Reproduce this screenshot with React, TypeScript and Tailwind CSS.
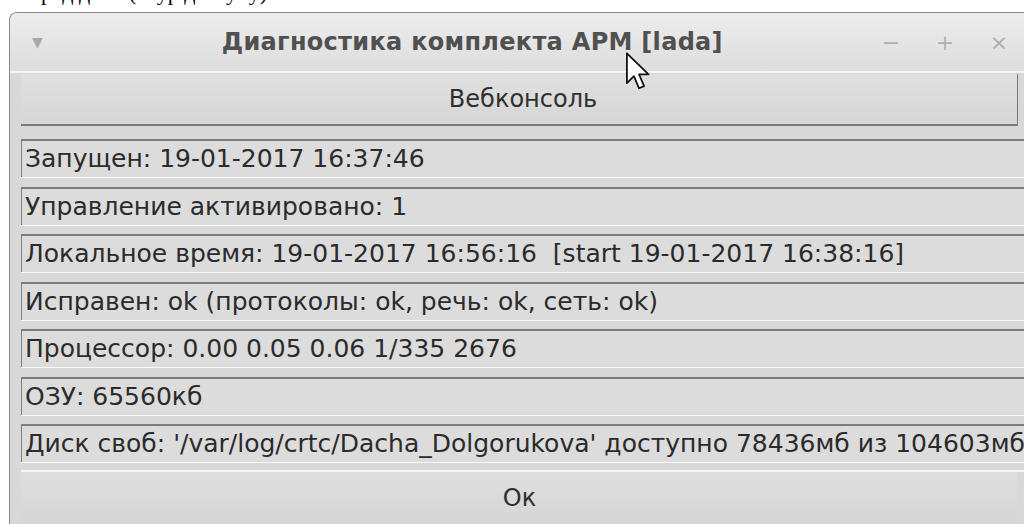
import React from "react";

const rows = [
  "Запущен: 19-01-2017 16:37:46",
  "Управление активировано: 1",
  "Локальное время: 19-01-2017 16:56:16\u00a0\u00a0[start 19-01-2017 16:38:16]",
  "Исправен: ok (протоколы: ok, речь: ok, сеть: ok)",
  "Процессор: 0.00 0.05 0.06 1/335 2676",
  "ОЗУ: 65560кб",
  "Диск своб: '/var/log/crtc/Dacha_Dolgorukova' доступно 78436мб из 104603мб",
];

function Pointer() {
  return (
    <svg width="28" height="46" viewBox="0 0 22 34" className="absolute left-[625px] top-[50px]">
      <path
        d="M1.5 1.5 L1.5 25 L7 19.5 L11 29 L15 27.3 L11 18 L18.5 18 Z"
        fill="#ffffff"
        stroke="#111111"
        strokeWidth="1.4"
        strokeLinejoin="round"
      />
    </svg>
  );
}

export default function App() {
  return (
    <div className="relative w-[1024px] h-[524px] overflow-hidden bg-white font-['DejaVu_Sans','Noto_Sans',sans-serif]">
      {/* tail of the text line above the dialog */}
      <div className="h-[12px] overflow-hidden">
        <div className="-mt-[19px] pl-[30px] font-['Liberation_Serif',serif] text-[22px] leading-[24px] text-black whitespace-nowrap">
          ород данн (ы ур доступу)
        </div>
      </div>

      <div className="ml-[9px] w-[1040px] h-[512px] border-t border-l border-[#8a8a8a] rounded-tl-[8px] bg-[#d8d8d8] overflow-hidden">
        {/* title bar */}
        <div className="relative h-[60px] flex items-center bg-gradient-to-b from-[#ededed] to-[#dddddd] border-b-2 border-[#f4f4f4]">
          <span className="ml-[22px] text-[14px] text-[#a9a9a9]">▼</span>
          <span className="ml-[179px] text-[24px] font-bold text-[#505050] tracking-[0.3px]">
            Диагностика комплекта АРМ [lada]
          </span>
          <div className="ml-auto mr-[38px] flex items-center gap-[30px] text-[22px] text-[#b0b0b0]">
            <span className="w-[24px] text-center">−</span>
            <span className="w-[24px] text-center">+</span>
            <span className="w-[24px] text-center">×</span>
          </div>
        </div>

        <div className="pl-[11px] pt-[1px]">
          <button className="w-[997px] h-[52px] flex items-center justify-center pl-[8px] bg-gradient-to-b from-[#e0e0e0] to-[#d6d6d6] border-b-2 border-r border-[#7a7a7a] text-[24px] text-[#2f2f2f]">
            Вебконсоль
          </button>

          <div className="mt-[13px] flex flex-col gap-[9.5px]">
            {rows.map((text) => (
              <div
                key={text}
                className="w-[1040px] h-[38px] flex items-center pl-[3px] bg-[#dcdcdc] border-t-2 border-l border-[#7c7c7c] shadow-[0_1px_0_#f8f8f8] text-[25px] text-[#2b2b2b] whitespace-nowrap"
              >
                {text}
              </div>
            ))}
          </div>

          <div className="mt-[8px] border-t-2 border-[#f4f4f4]">
            <button className="w-[997px] h-[52px] flex items-center justify-center bg-gradient-to-b from-[#dedede] to-[#d6d6d6] text-[24px] text-[#2f2f2f]">
              Ок
            </button>
          </div>
        </div>
      </div>

      <Pointer />
    </div>
  );
}
